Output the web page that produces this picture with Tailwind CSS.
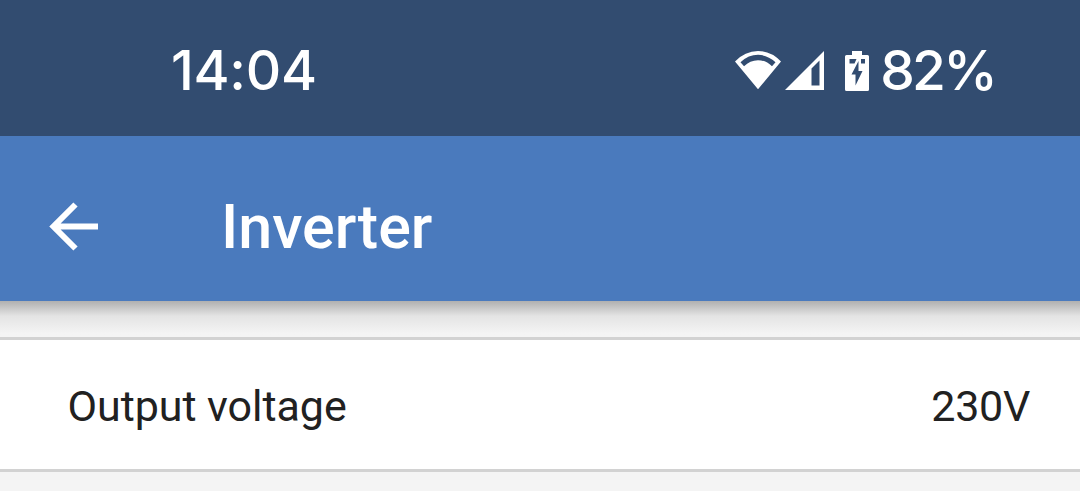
<!DOCTYPE html>
<html lang="en">
<head>
<meta charset="utf-8">
<title>Inverter</title>
<script src="https://cdn.jsdelivr.net/npm/@tailwindcss/browser@4"></script>
</head>
<body class="flex h-[491px] w-[1080px] flex-col overflow-hidden bg-[#f4f4f4] font-['Roboto',sans-serif]">
  <div class="flex h-[136px] shrink-0 items-center justify-between bg-[#324c70] pr-[85px] pl-[171px] pt-[5px] font-['Inter',sans-serif] text-[55px] leading-none font-medium text-white">
    <span class="tracking-[-0.3px]">14:04</span>
    <div class="flex items-center">
      <svg class="h-[48px] w-[144px]" viewBox="732 47 144 48" fill="#fff">
        <path fill-rule="evenodd" d="M735 61.500Q745 51 758 51T781 61.500L758 89.300ZM740.500 62.200L744 66.300Q750 60.200 758 60.200T772 66.300L775.500 62.200Q767.500 54.800 758 54.800T740.500 62.200Z"/>
        <path fill-rule="evenodd" d="M785 90L824 51V90ZM811.500 68.500V85.500H819.500V60.500Z"/>
        <path fill-rule="evenodd" d="M852 51H862V55H867.500Q869 55 869 56.500V89.500Q869 91 867.500 91H846.500Q845 91 845 89.500V56.500Q845 55 846.500 55H852ZM849.500 59V63.500H854.500L856.500 59ZM861 59V63.500H865V59ZM858.500 61L851.500 74.500H855.500V85.500L862.500 71H858.500Z"/>
      </svg>
      <span class="ml-[4px] tracking-[-2.8px]">82%</span>
    </div>
  </div>
  <header class="flex h-[165px] shrink-0 items-center bg-[#4a7abd] pt-[16px] pl-[49px] text-white">
    <svg class="h-[50px] w-[50px]" viewBox="49 202 50 50" fill="none" stroke="#fff" stroke-width="6"><path d="M98 226.500H55M75.500 204.500L53.500 226.500L75.500 248.500"/></svg>
    <h1 class="ml-[122px] pt-[2px] text-[61px] leading-none font-medium">Inverter</h1>
  </header>
  <div class="h-[36px] shrink-0 bg-linear-to-b from-[#b0b0b0] via-[#e4e4e4] via-42% to-[#f4f4f4] to-90%"></div>
  <main class="flex h-[135px] shrink-0 items-center justify-between border-y-[3px] border-[#d2d2d2] bg-white pr-[50px] pl-[67.500px] pt-[4px] text-[43px] leading-none text-[#212121]">
    <span class="tracking-[-0.05px]">Output voltage</span>
    <span class="tracking-[-0.3px]">230V</span>
  </main>
</body>
</html>
